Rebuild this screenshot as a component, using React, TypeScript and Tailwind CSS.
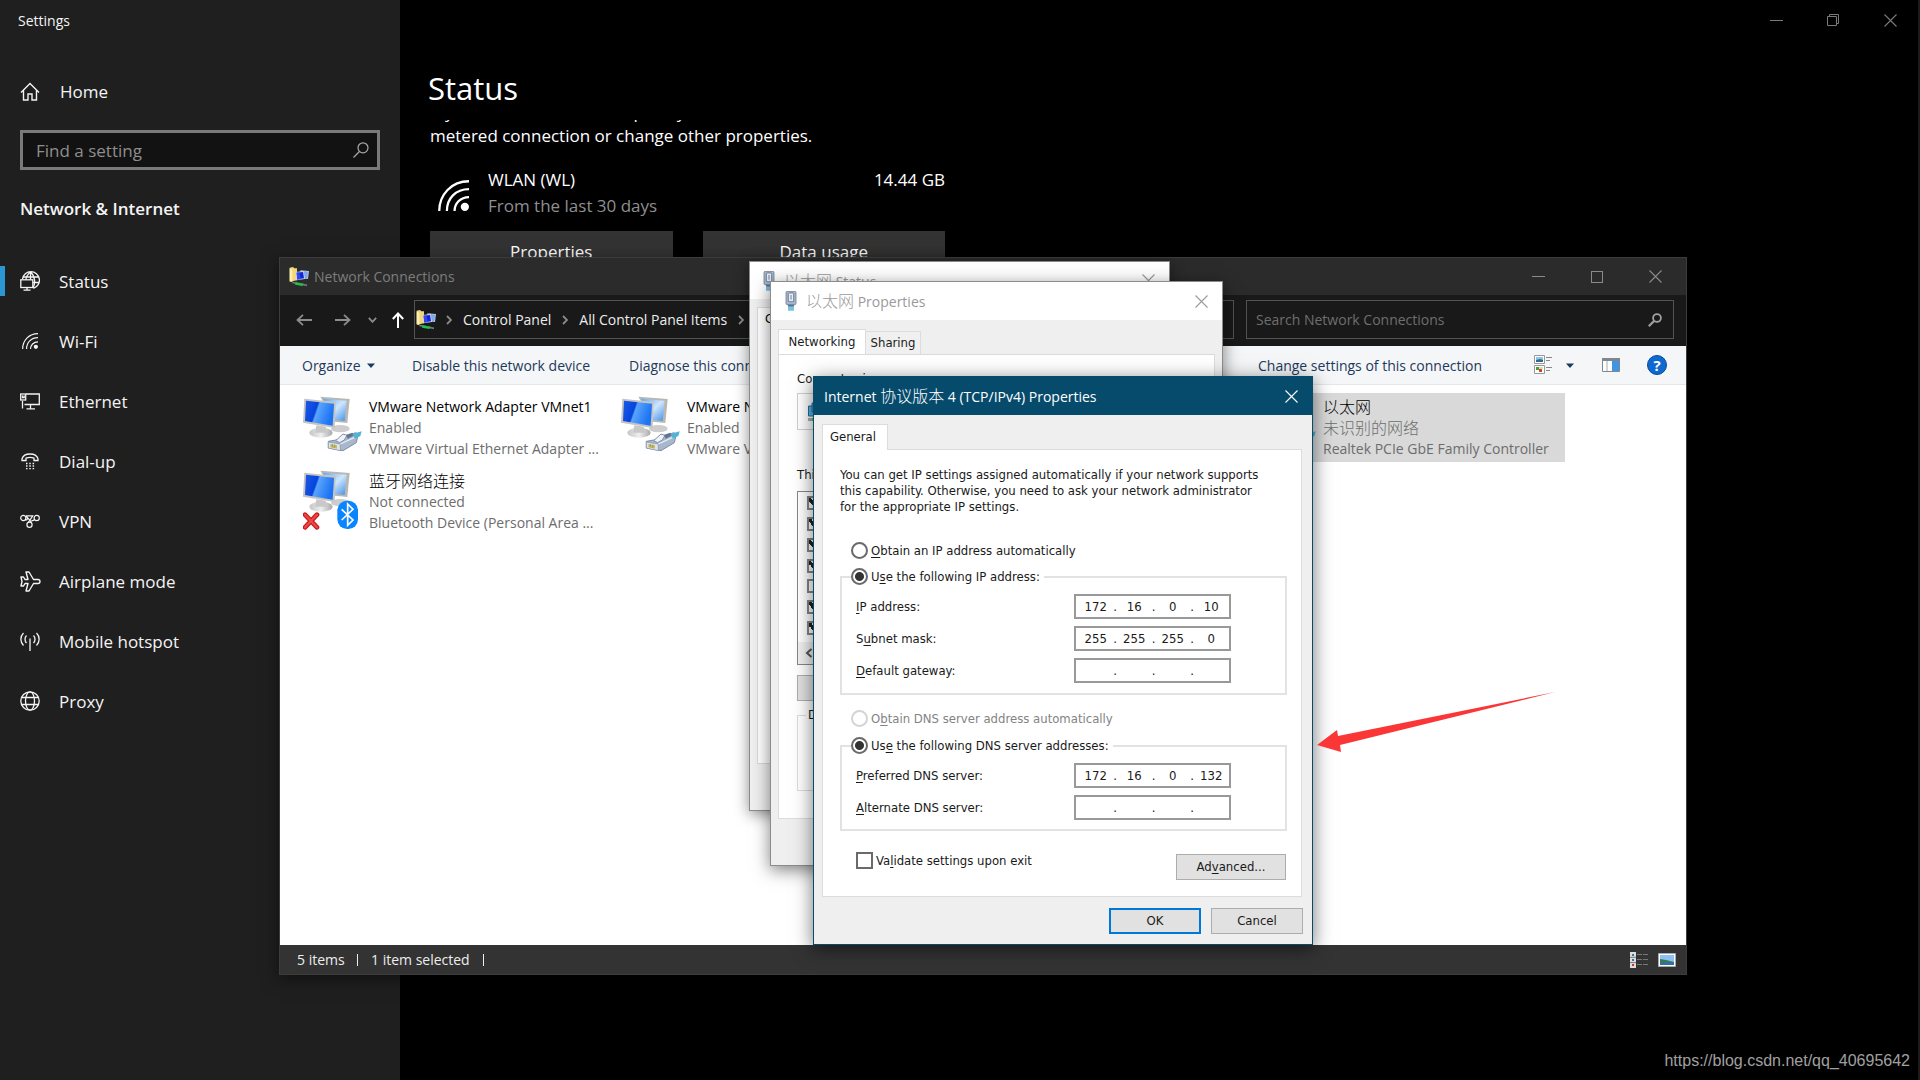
import React from "react";

const UI = "font-['Open_Sans','Noto_Sans_CJK_SC',sans-serif]";
const DLG = "font-['DejaVu_Sans_Condensed','Noto_Sans_CJK_SC',sans-serif]";

/* ---------- small icons ---------- */

function Close({ className = "" }: { className?: string }) {
  return (
    <svg viewBox="0 0 13 13" className={`size-[13px] shrink-0 ${className}`} fill="none" stroke="currentColor" strokeWidth="1.1">
      <path d="M.5.5l12 12M12.5.5l-12 12" />
    </svg>
  );
}

function Wifi({ size }: { size: number }) {
  return (
    <svg width={size} height={size} viewBox="0 0 30 30" fill="none" stroke="currentColor" strokeWidth="2.2">
      <path d="M1.2 30C1.2 14 13 1.2 30 1.2M8.6 30C8.6 18 17 8.8 30 8.8M16 30c0-7 5.500-13.500 14-13.500" />
      <circle cx="26" cy="26" r="4" fill="currentColor" stroke="none" />
    </svg>
  );
}

function HomeIcon() {
  return (
    <svg width="20" height="20" viewBox="0 0 20 20" fill="none" stroke="currentColor" strokeWidth="1.4">
      <path d="M1 10.500L10 1.500l9 9M3.500 8.500V18H8v-6h4v6h4.500V8.500" />
    </svg>
  );
}

function StatusIcon() {
  return (
    <svg width="20" height="20" viewBox="0 0 20 20" fill="none" stroke="currentColor" strokeWidth="1.300">
      <path d="M2.500 8A8.500 8.500 0 1 1 13.500 17.300M2.800 6h15.400M10.500 1c-3 2.500-4.500 5-4.500 7.500M10.500 1c5 4.500 5 11.500 2.500 16M10.500 1v7.500M13 11.500h5.500" />
      <rect x=".8" y="8.800" width="12" height="7.700" />
      <path d="M3.500 19.200h7M7 16.500v2.700" />
    </svg>
  );
}

function EthernetIcon() {
  return (
    <svg width="20" height="17" viewBox="0 0 20 17" fill="none" stroke="currentColor" strokeWidth="1.300">
      <path d="M6 1h13.300v10.500H4.500M10.500 11.500v4M6.500 15.800h8.500M2.500 8v7.500" />
      <rect x=".7" y="1" width="5" height="6" />
      <path d="M2.500 2.500v2h1.700v-2" />
    </svg>
  );
}

function DialIcon() {
  return (
    <svg width="18" height="17" viewBox="0 0 18 17" fill="none" stroke="currentColor" strokeWidth="1.300">
      <path d="M1 7.500V5.800C2 2.500 5.500 1 9 1s7 1.500 8 4.800v1.700h-4V5.200c-2.500-1-5.500-1-8 0v2.300z" />
      <path d="M5 10.500h1.500M8.300 10.500h1.500M11.600 10.500h1.500M5 13h1.500M8.300 13h1.500M11.600 13h1.500M5 15.600h1.500M8.300 15.600h1.500M11.600 15.600h1.500" />
    </svg>
  );
}

function VpnIcon() {
  return (
    <svg width="20" height="14" viewBox="0 0 20 14" fill="none" stroke="currentColor" strokeWidth="1.200">
      <circle cx="3.300" cy="4" r="2.600" />
      <circle cx="16.700" cy="4" r="2.600" />
      <circle cx="9.500" cy="10.700" r="2.600" />
      <path d="M5.500 5.500c2 1.500 2.500-1 1-3.700h6.300L8.500 8.200M5.500 2.500c2.500 0 3.500 3.500 6 5.500M14.500 5.500c-1 1-2 1.300-3 .8" />
    </svg>
  );
}

function PlaneIcon() {
  return (
    <svg width="21" height="21" viewBox="0 0 21 21" fill="none" stroke="currentColor" strokeWidth="1.400" strokeLinejoin="round">
      <path d="M6 1h3l4.500 7.500H18c2.600 0 2.600 4 0 4h-4.500L9 20H6l2-7.500H5L3.500 15H1l1-4.500L1 6h2.500L5 8.500h3z" />
    </svg>
  );
}

function HotspotIcon() {
  return (
    <svg width="20" height="19" viewBox="0 0 20 19" fill="none" stroke="currentColor" strokeWidth="1.300">
      <path d="M3.500 1C0 4.500 0 10 3.500 13.500M6.500 3.500c-2 2-2 5.500 0 7.500M16.500 1c3.500 3.500 3.500 9 0 12.500M13.500 3.500c2 2 2 5.500 0 7.500M10 6.500V19" />
    </svg>
  );
}

function ProxyIcon() {
  return (
    <svg width="20" height="20" viewBox="0 0 20 20" fill="none" stroke="currentColor" strokeWidth="1.300">
      <circle cx="10" cy="10" r="9.200" />
      <ellipse cx="10" cy="10" rx="4.500" ry="9.200" />
      <path d="M1.500 6.500h17M1.500 13.500h17" />
    </svg>
  );
}

function FolderNet() {
  return (
    <svg width="20" height="20" viewBox="0 0 60 60" className="shrink-0">
      <path d="M2 2l10-2 4 4h8v36L2 44z" fill="#f0d77a" />
      <path d="M2 4l8 4v38l-8-4z" fill="#fbeeb0" />
      <path d="M34 10l26 2-3 24-20-2z" fill="#b9c6dc" />
      <path d="M44 13l13 1-2 19-11-1z" fill="#7fa5ee" />
      <path d="M20 15l24-3 4 24-26 4z" fill="#c9d3e6" />
      <path d="M23 17l19-2 3 19-20 3z" fill="#1224d8" />
      <path d="M23 17l8-1 5 20-11 2z" fill="#3048ea" />
      <path d="M10 46l30 6M40 52l14 3" stroke="#6d7a72" strokeWidth="5" />
      <path d="M20 46l24 4-4 7-22-4z" fill="#1fc04b" />
    </svg>
  );
}

function Plug() {
  return (
    <svg width="12" height="20" viewBox="0 0 36 60" className="shrink-0">
      <rect x="3" y="1" width="30" height="40" rx="4" fill="#a9b6c9" stroke="#6f8098" strokeWidth="2.500" />
      <rect x="10" y="6" width="16" height="26" rx="2" fill="#e8eef6" stroke="#5f7088" strokeWidth="2.500" />
      <rect x="16" y="12" width="4" height="14" fill="#8b9bb3" />
      <path d="M8 41h20l-2 6H10z" fill="#56749a" />
      <path d="M12 47v12M18 47v12M24 47v12" stroke="#36a6cf" strokeWidth="4" />
    </svg>
  );
}

/* Pair of monitors with either a cable plug or a bluetooth badge. */
function AdapterIcon({ kind }: { kind: "cable" | "bluetooth" }) {
  return (
    <svg width="60" height="60" viewBox="0 0 180 180" className="shrink-0">
      <defs>
        <linearGradient id={`front-${kind}`} x1="0" y1="0" x2="1" y2="0.300">
          <stop offset="0" stopColor="#1c5cea" />
          <stop offset=".44" stopColor="#0644dc" />
          <stop offset=".5" stopColor="#5aa4fb" />
          <stop offset="1" stopColor="#1d74f5" />
        </linearGradient>
        <linearGradient id={`back-${kind}`} x1="0" y1="0" x2="1" y2="1">
          <stop offset="0" stopColor="#5fa5f0" />
          <stop offset=".5" stopColor="#cfe6fb" />
          <stop offset="1" stopColor="#3f8eea" />
        </linearGradient>
        <linearGradient id={`base-${kind}`} x1="0" y1="0" x2="1" y2="0">
          <stop offset="0" stopColor="#c4c4c4" />
          <stop offset=".5" stopColor="#efefef" />
          <stop offset="1" stopColor="#a8a8a8" />
        </linearGradient>
      </defs>
      <ellipse cx="112" cy="98" rx="28" ry="11" fill="#cdcdcd" />
      <path d="M52 2l88 7-7 72-37-4z" fill="#b9b7b2" />
      <path d="M60 8l71 6-6 61-32-4z" fill={`url(#back-${kind})`} />
      <ellipse cx="54" cy="110" rx="35" ry="15" fill={`url(#base-${kind})`} />
      <path d="M40 88l28 4 4 18H36z" fill="#c8c8c8" />
      <path d="M4 8l94 10-3 78L0 80z" fill="#c6c4c0" />
      <path d="M9 14l84 9-4 66L6 75z" fill={`url(#front-${kind})`} />
      {kind === "cable" ? (
        <g strokeLinejoin="round">
          <path d="M76 136l34-6 48-20 8 4-6 26-40 24-44-8z" fill="#a9b7cc" stroke="#7f8ea8" strokeWidth="3" />
          <path d="M76 138l36 6v20l-36-8z" fill="#dfe4ea" stroke="#7f8ea8" strokeWidth="2" />
          <path d="M82 144l20 4v10l-20-4z" fill="#c9bd62" />
          <path d="M88 144v10M95 146v10" stroke="#8d8a5a" strokeWidth="2" />
          <path d="M112 144l48-22" stroke="#e7edf5" strokeWidth="4" />
          <path d="M98 134l22-20 12 4-8 14-14 8z" fill="#eef3f9" stroke="#7f8ea8" strokeWidth="3" />
          <path d="M130 116l18-6 6 8-20 10z" fill="#5f748f" />
          <path d="M148 114l28-8-4 14-16 8z" fill="#4fb4d6" />
        </g>
      ) : (
        <g>
          <rect x="103" y="92" width="62" height="85" rx="29" fill="#0a84ff" />
          <path d="M116 118l34 32-16 16v-64l16 16-34 32" fill="none" stroke="#fff" strokeWidth="5" />
          <path d="M6 134l36 38M42 134L6 172" stroke="#c81414" strokeWidth="14" strokeLinecap="round" />
          <path d="M6 134l36 38M42 134L6 172" stroke="#ee4545" strokeWidth="7" strokeLinecap="round" />
        </g>
      )}
    </svg>
  );
}

function Chevron() {
  return (
    <svg width="6" height="10" viewBox="0 0 6 10" fill="none" stroke="#8a8a8a" strokeWidth="1.800" className="shrink-0">
      <path d="M1 1l4 4-4 4" />
    </svg>
  );
}

function Triangle() {
  return (
    <svg width="8" height="5" viewBox="0 0 8 5" className="shrink-0">
      <path d="M0 .5h8L4 5z" fill="#1b3a63" />
    </svg>
  );
}

/* Chinese runs are set a little larger than the Latin text beside them. */
function Zh({ children }: { children: React.ReactNode }) {
  return (
    <span lang="zh" className="font-['Noto_Sans_CJK_SC',sans-serif] text-[16px] font-light">
      {children}
    </span>
  );
}

/* ---------- settings page ---------- */

const NAV = [
  { label: "Status", icon: <StatusIcon />, active: true },
  { label: "Wi-Fi", icon: <Wifi size={16} /> },
  { label: "Ethernet", icon: <EthernetIcon /> },
  { label: "Dial-up", icon: <DialIcon /> },
  { label: "VPN", icon: <VpnIcon /> },
  { label: "Airplane mode", icon: <PlaneIcon /> },
  { label: "Mobile hotspot", icon: <HotspotIcon /> },
  { label: "Proxy", icon: <ProxyIcon /> },
];

function Sidebar() {
  return (
    <aside className="w-[400px] shrink-0 bg-[#1f1f1f] text-[17px] text-[#f4f4f4]">
      <h1 className="flex h-[42px] items-center pl-[18px] text-sm">Settings</h1>
      <a href="#home" className="mt-7 flex h-11 items-center">
        <span className="flex w-[60px] justify-center">
          <HomeIcon />
        </span>
        Home
      </a>
      <div className="mx-5 mt-4 flex h-10 items-center border-[3px] border-[#7a7a7a] bg-[#121212] pr-2">
        <input
          type="text"
          aria-label="Find a setting"
          placeholder="Find a setting"
          className="min-w-0 flex-1 bg-transparent pl-[13px] pt-0.5 outline-none placeholder:text-[#8e8e8e]"
        />
        <svg width="16" height="16" viewBox="0 0 16 16" fill="none" stroke="#a8a8a8" strokeWidth="1.200">
          <circle cx="10" cy="5.800" r="5" />
          <path d="M6.400 9.500L.5 15.500" />
        </svg>
      </div>
      <h2 className="mt-[22px] flex h-[34px] items-center pl-5 text-[17px] font-semibold">Network &amp; Internet</h2>
      <nav className="mt-[25px]">
        {NAV.map((n) => (
          <a key={n.label} href={`#${n.label}`} className="flex h-[60px] items-center">
            <span className={n.active ? "h-[30px] w-[5px] bg-[#2b96d2]" : "w-[5px]"} />
            <span className="flex w-[54px] justify-center pr-1">{n.icon}</span>
            <span className="pt-0.5">{n.label}</span>
          </a>
        ))}
      </nav>
    </aside>
  );
}

function StatusPage() {
  return (
    <main className="min-w-0 flex-1 border-r-2 border-[#1c1c1c] bg-black text-[17px] text-white">
      <div className="flex h-10 items-center justify-end gap-11 pr-[21px] text-[#7a7a7a]">
        <button aria-label="Minimize" className="h-px w-[13px] bg-current" />
        <button aria-label="Restore">
          <svg width="13" height="13" viewBox="0 0 13 13" fill="none" stroke="currentColor" strokeWidth="1">
            <path d="M.5 2.500h9v9h-9zM2.500 2.500v-2h9v9h-2" />
          </svg>
        </button>
        <button aria-label="Close">
          <Close />
        </button>
      </div>
      <h2 className="ml-7 mt-5 flex h-[60px] items-center pb-1 text-[31px]">Status</h2>
      <div className="ml-[30px] w-[515px] overflow-hidden">
        <p className="-mt-5 leading-6">
          If you have a limited data plan, you can make this network a
          <br />
          metered connection or change other properties.
        </p>
        <div className="mt-[19px] flex">
          <span className="flex w-[58px] items-end pb-2 pl-2">
            <Wifi size={31} />
          </span>
          <div className="flex-1">
            <div className="flex justify-between leading-[26px]">
              <span>WLAN (WL)</span>
              <span>14.44 GB</span>
            </div>
            <div className="leading-[26px] text-[#8f8f8f]">From the last 30 days</div>
          </div>
        </div>
        <div className="mt-3 grid grid-cols-2 gap-[30px]">
          <button className="h-[42px] bg-[#333]">Properties</button>
          <button className="h-[42px] bg-[#333]">Data usage</button>
        </div>
      </div>
    </main>
  );
}

/* ---------- network connections window ---------- */

function Adapter({
  title,
  state,
  device,
  kind = "cable",
  className = "",
}: {
  title: React.ReactNode;
  state: React.ReactNode;
  device: string;
  kind?: "cable" | "bluetooth";
  className?: string;
}) {
  return (
    <li className={`flex h-[69px] gap-1.5 pl-[7px] pt-[3px] ${className}`}>
      <AdapterIcon kind={kind} />
      <div className="min-w-0 whitespace-nowrap text-[#6d6d6d]">
        <div className="h-[21px] leading-[21px] text-black">{title}</div>
        <div className="h-[21px] leading-[21px]">{state}</div>
        <div className="h-[21px] leading-[21px]">{device}</div>
      </div>
    </li>
  );
}

function NetworkConnections() {
  return (
    <section
      className={`absolute left-[279px] top-[257px] flex w-[1408px] flex-col border border-[#3c3c3c] bg-white text-[14px] shadow-[0_4px_16px_rgba(0,0,0,0.5)] ${UI}`}
    >
      <header className="flex h-[37px] items-center bg-[#2b2b2b] pl-[9px] pr-6 text-[#7d7d7d]">
        <FolderNet />
        <span className="ml-[5px] flex-1">Network Connections</span>
        <div className="flex items-center gap-[46px] text-[#8a8a8a]">
          <button aria-label="Minimize" className="h-px w-[13px] bg-current" />
          <button aria-label="Maximize" className="size-3 border border-current" />
          <button aria-label="Close">
            <Close />
          </button>
        </div>
      </header>
      <div className="flex h-[51px] items-center bg-[#191919] pb-0.5 pl-4 pr-3 text-[#ededed]">
        <div className="flex items-center text-[#8c8c8c]">
          <button aria-label="Back">
            <svg width="16" height="12" viewBox="0 0 16 12" fill="none" stroke="currentColor" strokeWidth="1.800">
              <path d="M16 6H1.500M7 .8L1.500 6 7 11.200" />
            </svg>
          </button>
          <button aria-label="Forward" className="ml-[23px]">
            <svg width="16" height="12" viewBox="0 0 16 12" fill="none" stroke="currentColor" strokeWidth="1.800">
              <path d="M0 6h14.500M9 .8L14.500 6 9 11.200" />
            </svg>
          </button>
          <button aria-label="Recent locations" className="ml-[17px]">
            <svg width="9" height="6" viewBox="0 0 9 6" fill="none" stroke="currentColor" strokeWidth="1.800">
              <path d="M.8.8l3.700 4 3.700-4" />
            </svg>
          </button>
          <button aria-label="Up" className="ml-[15px] text-white">
            <svg width="12" height="16" viewBox="0 0 12 16" fill="none" stroke="currentColor" strokeWidth="2">
              <path d="M6 16V1.500M.8 7L6 1.500 11.200 7" />
            </svg>
          </button>
        </div>
        <nav className="ml-[10px] flex h-[39px] flex-1 items-center whitespace-nowrap border border-[#535353] pl-px">
          <FolderNet />
          <span className="ml-[10px] flex items-center gap-[11px]">
            <Chevron />
            <a href="#control-panel">Control Panel</a>
            <Chevron />
            <a href="#all-items">All Control Panel Items</a>
            <Chevron />
          </span>
        </nav>
        <div className="ml-3 flex h-[39px] w-[428px] items-center border border-[#535353] pr-[11px]">
          <input
            type="text"
            aria-label="Search Network Connections"
            placeholder="Search Network Connections"
            className="min-w-0 flex-1 bg-transparent pl-[9px] outline-none placeholder:text-[#6e6e6e]"
          />
          <svg width="14" height="14" viewBox="0 0 14 14" fill="none" stroke="#a0a0a0" strokeWidth="1.800">
            <circle cx="9" cy="5" r="3.900" />
            <path d="M6 8L.8 13.200" strokeWidth="2.200" />
          </svg>
        </div>
      </div>
      <div className="flex h-[39px] items-center whitespace-nowrap border-b border-[#e4e7ea] bg-[#f4f6f8] pl-[22px] pr-[19px] text-[#1e395b]">
        <button className="flex w-[73px] items-center justify-between">
          Organize <Triangle />
        </button>
        <button className="ml-[37px] w-[181px] text-left">Disable this network device</button>
        <button className="ml-9">Diagnose this connection</button>
        <span className="flex-1" />
        <button className="w-[276px] text-left">Change settings of this connection</button>
        <button aria-label="Change view" className="flex items-center gap-[14px]">
          <svg width="18" height="20" viewBox="0 0 18 20">
            <path d="M.5.500h10v8H.5zM.5 10.500h10v8H.5z" fill="#fff" stroke="#999" />
            <path d="M2 2h7v5H2z" fill="#8fc2ee" />
            <path d="M2 5l4-1 3 1v2H2z" fill="#2f6a8c" />
            <path d="M2 12h3v3H2z" fill="#4a9c3d" />
            <path d="M5 12h4v2H5z" fill="#cfe3b0" />
            <path d="M5 14h3v3H5z" fill="#c8482d" />
            <path d="M12 2.500h6M12 5.500h4M12 12.500h6M12 15.500h4" stroke="#888" />
          </svg>
          <Triangle />
        </button>
        <button aria-label="Preview pane" className="ml-7">
          <svg width="18" height="14" viewBox="0 0 18 14">
            <path d="M.5.500h17v13H.5z" fill="#fff" stroke="#7e8791" />
            <path d="M0 0h18v3H0z" fill="#7e8791" />
            <path d="M10 3h7v10h-7z" fill="#3f97e3" />
            <path d="M5 3v10" stroke="#aaa" />
          </svg>
        </button>
        <button
          aria-label="Help"
          className="ml-[27px] flex size-5 items-center justify-center rounded-full border border-[#0a4b9c] bg-[#0f69cf] text-[15px] font-bold leading-none text-white"
        >
          ?
        </button>
      </div>
      <ul className="grid min-h-[560px] auto-rows-[74px] grid-cols-[318px_318px_318px_315px] content-start pl-4 pt-2">
        <Adapter title="VMware Network Adapter VMnet1" state="Enabled" device="VMware Virtual Ethernet Adapter ..." />
        <Adapter title="VMware Network Adapter VMnet8" state="Enabled" device="VMware Virtual Ethernet Adapter ..." />
        <Adapter
          title={<Zh>以太网</Zh>}
          state={<Zh>未识别的网络</Zh>}
          device="Realtek PCIe GbE Family Controller"
          className="col-start-4 bg-[#d9d9d9]"
        />
        <Adapter
          title={<Zh>蓝牙网络连接</Zh>}
          state="Not connected"
          device="Bluetooth Device (Personal Area ..."
          kind="bluetooth"
          className="col-start-1"
        />
      </ul>
      <footer className="flex h-[29px] items-center bg-[#333] pl-[17px] pr-[10px] text-[#ededed]">
        <span className="w-[60px]">5 items</span>
        <span className="h-3 w-px bg-[#ededed]" />
        <span className="ml-[13px] w-[112px]">1 item selected</span>
        <span className="h-3 w-px bg-[#ededed]" />
        <span className="flex-1" />
        <button aria-label="Details view">
          <svg width="18" height="16" viewBox="0 0 18 16">
            <path d="M0 0h6v16H0z" fill="#ddd" />
            <path d="M2 2h2v2H2z" fill="#2b7f91" />
            <path d="M2 7h2v2H2z" fill="#4467b3" />
            <path d="M2 12h2v2H2z" fill="#c0392b" />
            <path d="M0 5.300h6M0 10.600h6" stroke="#777" />
            <path d="M7 2.500h5M13 2.500h5M7 7.500h5M13 7.500h5M7 12.500h5M13 12.500h5" stroke="#777" />
          </svg>
        </button>
        <button aria-label="Large icons view" className="ml-[10px]">
          <svg width="18" height="14" viewBox="0 0 18 14">
            <path d="M.5.500h17v13H.5z" fill="#fff" stroke="#aaa" />
            <path d="M2 2h14v10H2z" fill="#8dc0f5" />
            <path d="M2 6l6 1 8 2v1H2z" fill="#3d7a4d" />
            <path d="M2 9.500h14V12H2z" fill="#2f6fb0" />
          </svg>
        </button>
      </footer>
    </section>
  );
}

/* ---------- dialogs ---------- */

function StatusDialog() {
  return (
    <section
      className={`absolute left-[749px] top-[261px] flex h-[550px] w-[421px] flex-col border border-[#8b8b8b] bg-[#efefef] shadow-[0_3px_14px_rgba(0,0,0,0.45)] ${DLG}`}
    >
      <header className={`flex h-[37px] items-center bg-white pl-[13px] pr-[14px] text-[14px] text-[#9a9a9a] ${UI}`}>
        <Plug />
        <span className="ml-[9px] flex-1 leading-5">
          <Zh>以太网</Zh> Status
        </span>
        <button aria-label="Close">
          <Close />
        </button>
      </header>
      <div className="mx-[7px] mb-[46px] mt-2 flex-1 border border-[#d9d9d9] bg-white pl-[7px] pt-[3px] text-[13px] leading-4">General</div>
    </section>
  );
}

const SERVICES = [true, true, true, true, false, true, true];

function EthernetProperties() {
  return (
    <section
      className={`absolute left-[770px] top-[281px] flex h-[585px] w-[453px] flex-col border border-[#8b8b8b] bg-[#efefef] text-[13px] text-[#1a1a1a] shadow-[0_4px_16px_rgba(0,0,0,0.5)] ${DLG}`}
    >
      <header className={`flex h-[38px] items-center bg-white pl-[14px] pr-[14px] text-[14px] text-[#9a9a9a] ${UI}`}>
        <Plug />
        <span className="ml-[9px] flex-1 leading-5">
          <Zh>以太网</Zh> Properties
        </span>
        <button aria-label="Close">
          <Close />
        </button>
      </header>
      <div className="ml-[7px] mt-[9px] flex items-end">
        <button className="-mb-px h-[26px] w-[88px] border border-b-0 border-[#dcdcdc] bg-white pb-0.5">Networking</button>
        <button className="h-[23px] w-[55px] border border-b-0 border-l-0 border-[#dcdcdc] bg-[#f0f0f0]">Sharing</button>
      </div>
      <div className="mx-[7px] mb-[46px] flex-1 border border-[#dcdcdc] bg-white px-[18px] pt-4">
        <p className="leading-4">Connect using:</p>
        <div className="mt-1.5 flex h-[37px] items-center border border-[#d0d0d0] pl-[10px]">
          <svg width="20" height="20" viewBox="0 0 20 20">
            <path d="M4 1h14v9H4zM.5 4h12v10H.5z" fill="#56b4ea" stroke="#2a6d9c" />
            <path d="M0 16h14v3H0z" fill="#a8b0b0" />
            <path d="M4 16h8v3H4z" fill="#4fbe4f" />
          </svg>
        </div>
        <p className="mt-[37px] leading-4">This connection uses the following items:</p>
        <div className="mt-2 flex h-[174px] flex-col justify-between border border-[#828790] pt-1">
          {SERVICES.map((on, i) => (
            <input
              key={i}
              type="checkbox"
              aria-label={`Item ${i + 1}`}
              defaultChecked={on}
              className="ml-[9px] size-[14px] appearance-none border-2 border-[#858585] bg-white checked:bg-[linear-gradient(45deg,#fff_35%,#222_35%,#222_60%,#fff_60%)]"
            />
          ))}
          <div className="flex h-[22px] items-center bg-[#f0f0f0] pl-[7px]">
            <svg width="8" height="10" viewBox="0 0 8 10" fill="none" stroke="#555" strokeWidth="2">
              <path d="M6.500 1L2 5l4.500 4" />
            </svg>
          </div>
        </div>
        <button className="mt-[10px] h-[26px] w-[110px] border border-[#adadad] bg-[#e1e1e1]">Install...</button>
        <fieldset className="mt-[6px] h-[84px] border border-[#dcdcdc]">
          <legend className="ml-2 px-0.5 leading-4">Description</legend>
        </fieldset>
      </div>
    </section>
  );
}

function IpField({ label, value }: { label: string; value: string[] }) {
  return (
    <div
      role="group"
      aria-label={label}
      className="flex h-[25px] w-[157px] items-center border-2 border-[#999] bg-white pl-[3px] pr-px"
    >
      {value.map((v, i) => (
        <React.Fragment key={i}>
          {i > 0 && <span className="w-[5px] text-center">.</span>}
          <input
            type="text"
            aria-label={`${label} octet ${i + 1}`}
            defaultValue={v}
            className="min-w-0 flex-1 bg-transparent text-center outline-none"
          />
        </React.Fragment>
      ))}
    </div>
  );
}

/* Label text with an underlined access key at index k. */
function Key({ text, k }: { text: string; k: number }) {
  return (
    <span>
      {text.slice(0, k)}
      <u className="underline-offset-2">{text[k]}</u>
      {text.slice(k + 1)}
    </span>
  );
}

function Radio({ name, text, k, checked = false, disabled = false }: { name: string; text: string; k: number; checked?: boolean; disabled?: boolean }) {
  return (
    <label className={disabled ? "flex h-[17px] items-center gap-[3px] text-[#838383]" : "flex h-[17px] items-center gap-[3px]"}>
      <input
        type="radio"
        name={name}
        defaultChecked={checked}
        disabled={disabled}
        className="size-[17px] shrink-0 appearance-none rounded-full border-2 border-[#6a6a6a] bg-white checked:bg-[radial-gradient(circle,#333_4px,#fff_5px)] disabled:border-[#d4d4d4]"
      />
      <Key text={text} k={k} />
    </label>
  );
}

function Row({ text, k, value }: { text: string; k: number; value: string[] }) {
  return (
    <div className="flex h-[25px] items-center justify-between">
      <Key text={text} k={k} />
      <IpField label={text.replace(":", "")} value={value} />
    </div>
  );
}

const EMPTY = ["", "", "", ""];

function Ipv4Properties() {
  return (
    <section
      className={`absolute left-[813px] top-[376px] w-[500px] border border-[#064b6c] bg-[#efefef] pb-[10px] text-[13px] leading-4 text-[#1a1a1a] shadow-[0_4px_18px_rgba(0,0,0,0.55)] ${DLG}`}
    >
      <header className={`flex h-[38px] items-center bg-[#064b6c] pl-[10px] pr-[14px] text-[14px] text-white ${UI}`}>
        <span className="flex-1">
          Internet <Zh>协议版本</Zh> 4 (TCP/IPv4) Properties
        </span>
        <button aria-label="Close">
          <Close />
        </button>
      </header>
      <button className="relative z-10 ml-2 mt-[9px] block h-[26px] w-[66px] border border-b-0 border-[#dcdcdc] bg-white pb-0.5 pr-1">General</button>
      <form className="-mt-px ml-2 mr-[10px] h-[448px] border border-[#dcdcdc] bg-white pl-[17px] pr-[14px] pt-[17px]">
        <p className="whitespace-nowrap">
          You can get IP settings assigned automatically if your network supports
          <br />
          this capability. Otherwise, you need to ask your network administrator
          <br />
          for the appropriate IP settings.
        </p>
        <div className="ml-[11px] mt-[27px]">
          <Radio name="ip" text="Obtain an IP address automatically" k={0} />
        </div>
        <fieldset className="mt-[9px] border-2 border-[#e2e2e2] pb-[10px] pl-[14px] pr-[54px]">
          <legend className="-ml-[5px] pr-1">
            <Radio name="ip" text="Use the following IP address:" k={1} checked />
          </legend>
          <div className="mt-[9px] flex flex-col gap-[7px]">
            <Row text="IP address:" k={0} value={["172", "16", "0", "10"]} />
            <Row text="Subnet mask:" k={1} value={["255", "255", "255", "0"]} />
            <Row text="Default gateway:" k={0} value={EMPTY} />
          </div>
        </fieldset>
        <div className="ml-[11px] mt-[15px]">
          <Radio name="dns" text="Obtain DNS server address automatically" k={1} disabled />
        </div>
        <fieldset className="mt-[10px] border-2 border-[#e2e2e2] pb-[9px] pl-[14px] pr-[54px]">
          <legend className="-ml-[5px] pr-1">
            <Radio name="dns" text="Use the following DNS server addresses:" k={2} checked />
          </legend>
          <div className="mt-[9px] flex flex-col gap-[7px]">
            <Row text="Preferred DNS server:" k={0} value={["172", "16", "0", "132"]} />
            <Row text="Alternate DNS server:" k={0} value={EMPTY} />
          </div>
        </fieldset>
        <div className="mt-[21px] flex items-start justify-between pl-4 pr-px">
          <label className="flex h-[17px] items-center gap-[3px]">
            <input type="checkbox" className="size-[17px] appearance-none border-2 border-[#6a6a6a] bg-white checked:bg-[#333]" />
            <Key text="Validate settings upon exit" k={2} />
          </label>
          <button type="button" className="mt-[2px] h-[26px] w-[110px] border border-[#adadad] bg-[#e1e1e1]">
            <Key text="Advanced..." k={2} />
          </button>
        </div>
      </form>
      <div className="mt-[11px] flex justify-end gap-[10px] pr-[9px]">
        <button className="h-[26px] w-[92px] border-2 border-[#0078d7] bg-[#e1e1e1]">OK</button>
        <button className="h-[26px] w-[92px] border border-[#adadad] bg-[#e1e1e1]">Cancel</button>
      </div>
    </section>
  );
}

export default function App() {
  return (
    <div className={`relative flex min-h-screen overflow-hidden bg-black ${UI}`}>
      <Sidebar />
      <StatusPage />
      <NetworkConnections />
      <StatusDialog />
      <EthernetProperties />
      <Ipv4Properties />
      <svg width="240" height="62" viewBox="0 0 240 62" className="absolute left-[1317px] top-[691px]">
        <path d="M0 54L20 39l1 6L238 1 23 54l1 7z" fill="#fb3636" />
      </svg>
      <a
        href="https://blog.csdn.net/qq_40695642"
        className="absolute bottom-[7px] right-[10px] font-['Liberation_Sans',sans-serif] text-[16px] text-[#a0a0a0]"
      >
        https://blog.csdn.net/qq_40695642
      </a>
    </div>
  );
}
